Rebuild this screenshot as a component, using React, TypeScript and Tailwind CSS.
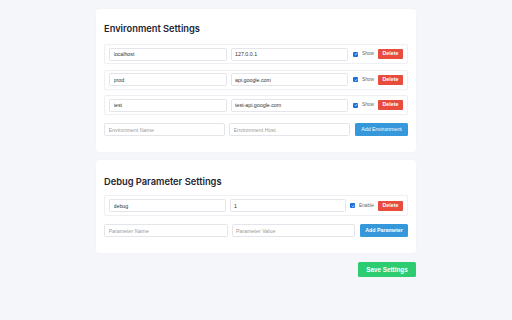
import React from 'react';

const envs = [
  { name: 'localhost', host: '127.0.0.1' },
  { name: 'prod', host: 'api.google.com' },
  { name: 'test', host: 'test-api.google.com' },
];

const inputCls =
  "flex-1 min-w-0 h-[13px] px-[3.5px] border border-[#e3e5ea] rounded-[1.5px] bg-white text-[5.3px] text-[#333] placeholder:text-[#9a9a9a] outline-none font-['Liberation_Sans',Arial,sans-serif]";

const Check: React.FC = () => (
  <span className="w-[5px] h-[5px] rounded-[1px] bg-[#1a6fe0] flex items-center justify-center shrink-0">
    <svg viewBox="0 0 10 10" className="w-[4px] h-[4px]">
      <path d="M2 5.2 L4.2 7.3 L8 2.8" fill="none" stroke="white" strokeWidth="1.8" />
    </svg>
  </span>
);

const DeleteBtn: React.FC = () => (
  <button className="w-[25px] h-[10px] bg-[#e74c3c] text-white text-[5.3px] font-bold rounded-[1px] shrink-0 flex items-center justify-center">
    Delete
  </button>
);

const App: React.FC = () => {
  return (
    <div className="w-[512px] h-[320px] bg-[#f5f6fa] font-['Liberation_Sans',Arial,sans-serif] pt-[9px]">
      <div className="w-[320px] mx-auto flex flex-col">
        <div className="bg-white rounded-[3px] shadow-[0_0_2px_rgba(0,0,0,0.04)] px-[8px] pt-[13px] pb-[16px]">
          <h2 className="font-['Inter',sans-serif] font-semibold text-[9.3px] leading-[14px] text-[#1f2430] mb-[8px]">Environment Settings</h2>

          <div className="flex flex-col gap-[5.5px]">
            {envs.map((e) => (
              <div key={e.name} className="h-[20px] flex items-center gap-[4px] px-[4px] border border-[#eff0f3] rounded-[2px] shadow-[0_0_1px_rgba(0,0,0,0.05)]">
                <input className={inputCls} defaultValue={e.name} />
                <input className={inputCls} defaultValue={e.host} />
                <div className="flex items-center ml-[1px]">
                  <Check />
                  <span className="text-[4.8px] text-[#666] ml-[4px] w-[16px]">Show</span>
                  <DeleteBtn />
                </div>
              </div>
            ))}
          </div>

          <div className="flex items-center gap-[4px] mt-[8px]">
            <input className={inputCls} placeholder="Environment Name" />
            <input className={inputCls} placeholder="Environment Host" />
            <button className="w-[53px] h-[13px] ml-[1px] bg-[#3498db] text-white text-[5.3px] rounded-[1.5px] shrink-0">Add Environment</button>
          </div>
        </div>

        <div className="bg-white rounded-[3px] shadow-[0_0_2px_rgba(0,0,0,0.04)] px-[8px] pt-[15px] pb-[16px] mt-[8px]">
          <h2 className="font-['Inter',sans-serif] font-semibold text-[9.3px] leading-[14px] text-[#1f2430] mb-[6px]">Debug Parameter Settings</h2>

          <div className="h-[21px] flex items-center gap-[4px] px-[4px] border border-[#eff0f3] rounded-[2px] shadow-[0_0_1px_rgba(0,0,0,0.05)]">
            <input className={inputCls} defaultValue="debug" />
            <input className={inputCls} defaultValue="1" />
            <div className="flex items-center">
              <Check />
              <span className="text-[4.8px] text-[#666] ml-[4px] w-[19px]">Enable</span>
              <DeleteBtn />
            </div>
          </div>

          <div className="flex items-center gap-[4px] mt-[8px]">
            <input className={inputCls} placeholder="Parameter Name" />
            <input className={inputCls} placeholder="Parameter Value" />
            <button className="w-[48px] h-[13px] ml-[1px] bg-[#3498db] text-white text-[5.3px] font-semibold rounded-[1.5px] shrink-0">Add Parameter</button>
          </div>
        </div>

        <div className="flex justify-end mt-[9px]">
          <button className="w-[58px] h-[15px] bg-[#2ecc71] text-white text-[6.3px] font-bold rounded-[1.5px]">Save Settings</button>
        </div>
      </div>
    </div>
  );
};

export default App;
